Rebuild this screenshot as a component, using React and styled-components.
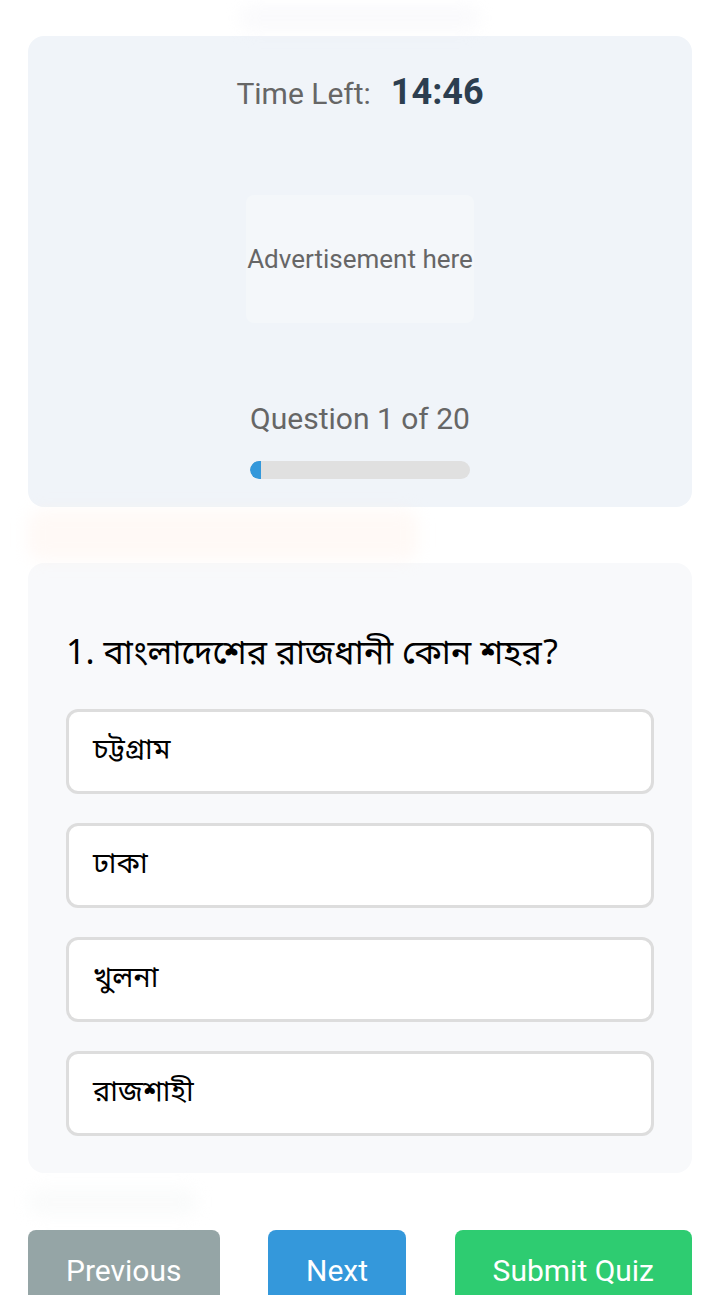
import styled, { createGlobalStyle } from 'styled-components';

const GlobalStyle = createGlobalStyle`
  * { box-sizing: border-box; }
  body {
    margin: 0;
    background: #ffffff;
    font-family: Roboto, 'Noto Sans', sans-serif;
  }
`;

const options = ['চট্টগ্রাম', 'ঢাকা', 'খুলনা', 'রাজশাহী'];

const App = () => {
  return (
    <>
      <GlobalStyle />
      <Page>
        <Haze $h={36} $w={240} $blobH={26} $color='rgba(240, 242, 245, 0.35)' $center />
        <StatusCard>
          <Timer>
            <span className='label'>Time Left:</span>
            <span className='value'>14:46</span>
          </Timer>
          <AdBox>Advertisement here</AdBox>
          <Counter>Question 1 of 20</Counter>
          <Progress>
            <Fill style={{ width: `${(1 / 20) * 100}%` }} />
          </Progress>
        </StatusCard>
        <Haze $h={56} $w={390} $blobH={50} $color='rgba(255, 238, 228, 0.35)' />
        <QuestionCard>
          <Question>1. বাংলাদেশের রাজধানী কোন শহর?</Question>
          <OptionList>
            {options.map((o) => (
              <Option key={o}>{o}</Option>
            ))}
          </OptionList>
        </QuestionCard>
        <Haze $h={57} $w={170} $blobH={28} $color='rgba(240, 241, 243, 0.3)' />
        <ButtonRow>
          <NavButton $bg='#95a5a6'>Previous</NavButton>
          <NavButton $bg='#3498db'>Next</NavButton>
          <NavButton $bg='#2ecc71'>Submit Quiz</NavButton>
        </ButtonRow>
      </Page>
    </>
  );
};

export default App;

const Page = styled.div`
  display: flex;
  flex-direction: column;
  padding: 0 28px;
  min-height: 1295px;
`;

const Haze = styled.div`
  height: ${({ $h }) => $h}px;
  display: flex;
  align-items: center;
  justify-content: ${({ $center }) => ($center ? 'center' : 'flex-start')};
  overflow: visible;

  &::before {
    content: '';
    display: block;
    width: ${({ $w }) => $w}px;
    height: ${({ $blobH }) => $blobH}px;
    background: ${({ $color }) => $color};
    filter: blur(8px);
    border-radius: 14px;
  }
`;

const StatusCard = styled.div`
  background: #f0f4f9;
  border-radius: 16px;
  padding: 31px 30px 28px;
  display: flex;
  flex-direction: column;
  align-items: center;
`;

const Timer = styled.div`
  display: flex;
  align-items: baseline;
  gap: 20px;
  line-height: 50px;

  .label {
    font-size: 30px;
    color: #666666;
  }

  .value {
    font-size: 36px;
    font-weight: 700;
    color: #2c3e50;
  }
`;

const AdBox = styled.div`
  width: 228px;
  height: 128px;
  margin-top: 76px;
  background: #f4f7fa;
  border-radius: 8px;
  display: flex;
  align-items: center;
  justify-content: center;
  font-size: 26px;
  color: #666666;
  white-space: nowrap;
`;

const Counter = styled.div`
  margin-top: 76px;
  font-size: 30px;
  line-height: 40px;
  color: #666666;
`;

const Progress = styled.div`
  margin-top: 22px;
  width: 220px;
  height: 18px;
  border-radius: 9px;
  background: #e0e0e0;
  overflow: hidden;
`;

const Fill = styled.div`
  height: 100%;
  background: #3498db;
  border-radius: 9px 0 0 9px;
`;

const QuestionCard = styled.div`
  background: #f8f9fb;
  border-radius: 16px;
  padding: 38px 38px 37px;
`;

const Question = styled.h2`
  margin: 31px 0 29px;
  font-family: 'Noto Sans Bengali', 'Noto Sans', Roboto, sans-serif;
  font-size: 34px;
  font-weight: 400;
  line-height: 48px;
  color: #000000;
`;

const OptionList = styled.div`
  display: flex;
  flex-direction: column;
  gap: 29px;
`;

const Option = styled.div`
  height: 85px;
  padding: 0 24px;
  display: flex;
  align-items: center;
  background: #ffffff;
  border: 3px solid #dddddd;
  border-radius: 12px;
  font-family: 'Noto Sans Bengali', 'Noto Sans', Roboto, sans-serif;
  font-size: 29px;
  color: #000000;
`;

const ButtonRow = styled.div`
  display: flex;
  justify-content: space-between;
  align-items: flex-start;
`;

const NavButton = styled.button`
  border: none;
  border-radius: 8px;
  background: ${({ $bg }) => $bg};
  color: #ffffff;
  font-family: Roboto, sans-serif;
  font-size: 30px;
  line-height: 34px;
  padding: 24px 38px;
  cursor: pointer;
`;
